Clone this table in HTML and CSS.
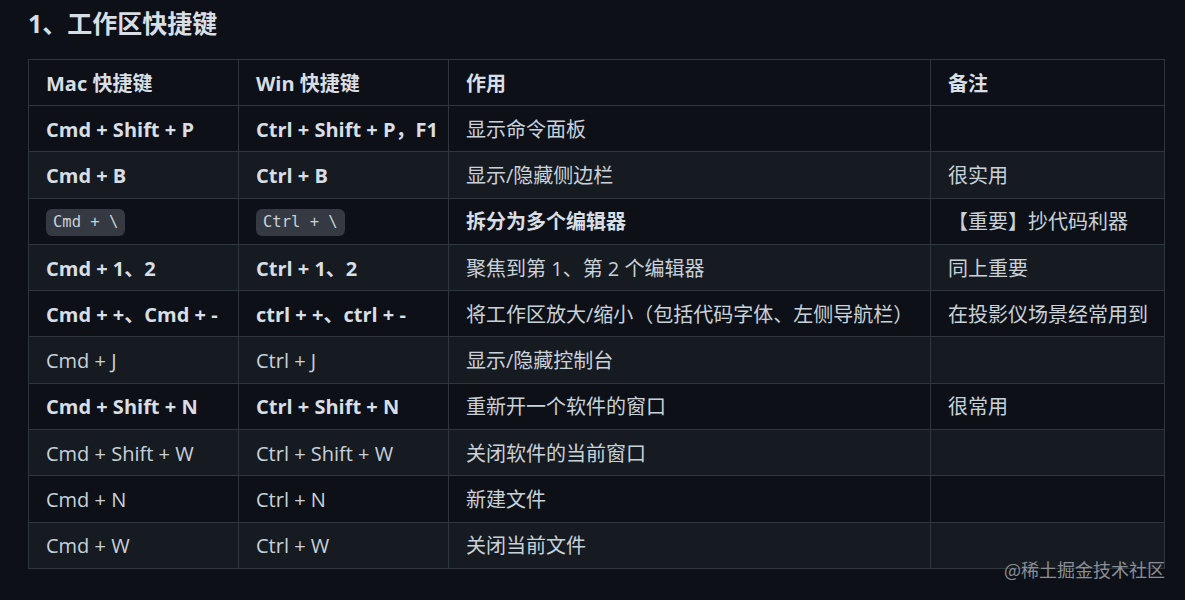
FILE: index.html
```html
<!DOCTYPE html>
<html lang="zh-CN">
<head>
<meta charset="utf-8">
<title>工作区快捷键</title>
<link rel="stylesheet" href="styles.css">
</head>
<body>
<main class="page">
  <h2 class="title">1、工作区快捷键</h2>
  <table class="keys">
    <colgroup>
      <col class="c-mac"><col class="c-win"><col class="c-use"><col class="c-note">
    </colgroup>
    <thead>
      <tr><th>Mac 快捷键</th><th>Win 快捷键</th><th>作用</th><th>备注</th></tr>
    </thead>
    <tbody>
      <tr><td><strong>Cmd + Shift + P</strong></td><td><strong>Ctrl + Shift + P，F1</strong></td><td>显示命令面板</td><td></td></tr>
      <tr><td><strong>Cmd + B</strong></td><td><strong>Ctrl + B</strong></td><td>显示/隐藏侧边栏</td><td>很实用</td></tr>
      <tr><td><code>Cmd + \</code></td><td><code>Ctrl + \</code></td><td><strong>拆分为多个编辑器</strong></td><td>【重要】抄代码利器</td></tr>
      <tr><td><strong>Cmd + 1、2</strong></td><td><strong>Ctrl + 1、2</strong></td><td>聚焦到第 1、第 2 个编辑器</td><td>同上重要</td></tr>
      <tr><td><strong>Cmd + +、Cmd + -</strong></td><td><strong>ctrl + +、ctrl + -</strong></td><td>将工作区放大/缩小（包括代码字体、左侧导航栏）</td><td>在投影仪场景经常用到</td></tr>
      <tr><td>Cmd + J</td><td>Ctrl + J</td><td>显示/隐藏控制台</td><td></td></tr>
      <tr><td><strong>Cmd + Shift + N</strong></td><td><strong>Ctrl + Shift + N</strong></td><td>重新开一个软件的窗口</td><td>很常用</td></tr>
      <tr><td>Cmd + Shift + W</td><td>Ctrl + Shift + W</td><td>关闭软件的当前窗口</td><td></td></tr>
      <tr><td>Cmd + N</td><td>Ctrl + N</td><td>新建文件</td><td></td></tr>
      <tr><td>Cmd + W</td><td>Ctrl + W</td><td>关闭当前文件</td><td></td></tr>
    </tbody>
  </table>
  <div class="watermark">@稀土掘金技术社区</div>
</main>
</body>
</html>
```

FILE: styles.css
```css
html, body {
  margin: 0;
  padding: 0;
  background: #0d1117;
}

body {
  color: #c9d1d9;
  font-family: "Open Sans", "Noto Sans CJK SC", sans-serif;
  font-size: 20px;
}

.page {
  position: relative;
  width: 1185px;
  height: 600px;
  padding: 6px 0 0 28px;
  box-sizing: border-box;
}

.title {
  margin: 0 0 19px;
  font-size: 25px;
  font-weight: 700;
  line-height: 34px;
  color: #d8dee5;
}

.keys {
  border-collapse: collapse;
  table-layout: fixed;
  width: 1136px;
}

.c-mac { width: 210px; }
.c-win { width: 210px; }
.c-use { width: 482px; }
.c-note { width: 234px; }

.keys th,
.keys td {
  border: 1px solid #30363d;
  padding: 2px 17px 0;
  height: 43.3px;
  text-align: left;
  white-space: nowrap;
  overflow: hidden;
  line-height: 26px;
}

.keys th {
  height: 43px;
  font-weight: 700;
  color: #d8dee5;
}

.keys tbody tr:nth-child(odd) { background: #0d1117; }
.keys tbody tr:nth-child(even) { background: #161b22; }

.keys strong {
  font-weight: 700;
  color: #d8dee5;
}

.keys code {
  display: inline-block;
  font-family: "DejaVu Sans Mono", "Liberation Mono", monospace;
  font-size: 15.5px;
  line-height: 27px;
  padding: 0 7px;
  border-radius: 6px;
  background: #343942;
  color: #c9d1d9;
  vertical-align: middle;
}

.watermark {
  position: absolute;
  right: 20px;
  top: 557px;
  font-family: "Noto Sans CJK SC", sans-serif;
  font-size: 18px;
  line-height: 24px;
  color: #8a8e95;
}
```
